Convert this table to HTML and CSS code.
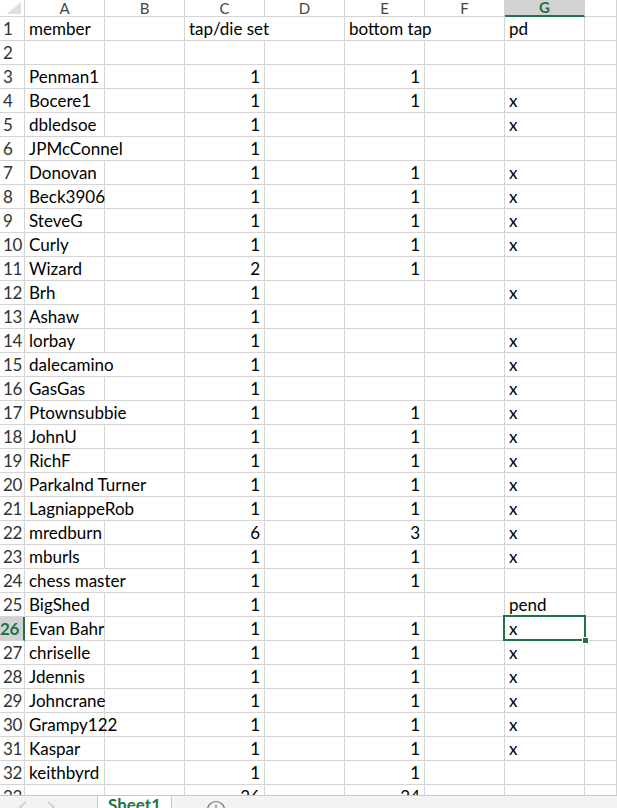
FILE: index.html
```html
<!DOCTYPE html>
<html>
<head>
<meta charset="utf-8">
<title>Sheet1</title>
<link rel="stylesheet" href="styles.css">
</head>
<body>
<div class="sheet">
  <div class="row head">
    <div class="corner"><span class="tri"></span></div>
    <div class="h">A</div><div class="h">B</div><div class="h">C</div><div class="h">D</div><div class="h">E</div><div class="h">F</div><div class="h sel">G</div><div class="h"></div>
  </div>
  <div class="row"><div class="n">1</div><div class="c">member</div><div class="c"></div><div class="c s2">tap/die set</div><div class="c s2">bottom tap</div><div class="c">pd</div><div class="c"></div></div>
  <div class="row"><div class="n">2</div><div class="c"></div><div class="c"></div><div class="c"></div><div class="c"></div><div class="c"></div><div class="c"></div><div class="c"></div><div class="c"></div></div>
  <div class="row"><div class="n">3</div><div class="c">Penman1</div><div class="c"></div><div class="c r">1</div><div class="c"></div><div class="c r">1</div><div class="c"></div><div class="c"></div><div class="c"></div></div>
  <div class="row"><div class="n">4</div><div class="c">Bocere1</div><div class="c"></div><div class="c r">1</div><div class="c"></div><div class="c r">1</div><div class="c"></div><div class="c">x</div><div class="c"></div></div>
  <div class="row"><div class="n">5</div><div class="c">dbledsoe</div><div class="c"></div><div class="c r">1</div><div class="c"></div><div class="c"></div><div class="c"></div><div class="c">x</div><div class="c"></div></div>
  <div class="row"><div class="n">6</div><div class="c s2">JPMcConnel</div><div class="c r">1</div><div class="c"></div><div class="c"></div><div class="c"></div><div class="c"></div><div class="c"></div></div>
  <div class="row"><div class="n">7</div><div class="c">Donovan</div><div class="c"></div><div class="c r">1</div><div class="c"></div><div class="c r">1</div><div class="c"></div><div class="c">x</div><div class="c"></div></div>
  <div class="row"><div class="n">8</div><div class="c">Beck3906</div><div class="c"></div><div class="c r">1</div><div class="c"></div><div class="c r">1</div><div class="c"></div><div class="c">x</div><div class="c"></div></div>
  <div class="row"><div class="n">9</div><div class="c">SteveG</div><div class="c"></div><div class="c r">1</div><div class="c"></div><div class="c r">1</div><div class="c"></div><div class="c">x</div><div class="c"></div></div>
  <div class="row"><div class="n">10</div><div class="c">Curly</div><div class="c"></div><div class="c r">1</div><div class="c"></div><div class="c r">1</div><div class="c"></div><div class="c">x</div><div class="c"></div></div>
  <div class="row"><div class="n">11</div><div class="c">Wizard</div><div class="c"></div><div class="c r">2</div><div class="c"></div><div class="c r">1</div><div class="c"></div><div class="c"></div><div class="c"></div></div>
  <div class="row"><div class="n">12</div><div class="c">Brh</div><div class="c"></div><div class="c r">1</div><div class="c"></div><div class="c"></div><div class="c"></div><div class="c">x</div><div class="c"></div></div>
  <div class="row"><div class="n">13</div><div class="c">Ashaw</div><div class="c"></div><div class="c r">1</div><div class="c"></div><div class="c"></div><div class="c"></div><div class="c"></div><div class="c"></div></div>
  <div class="row"><div class="n">14</div><div class="c">lorbay</div><div class="c"></div><div class="c r">1</div><div class="c"></div><div class="c"></div><div class="c"></div><div class="c">x</div><div class="c"></div></div>
  <div class="row"><div class="n">15</div><div class="c s2">dalecamino</div><div class="c r">1</div><div class="c"></div><div class="c"></div><div class="c"></div><div class="c">x</div><div class="c"></div></div>
  <div class="row"><div class="n">16</div><div class="c">GasGas</div><div class="c"></div><div class="c r">1</div><div class="c"></div><div class="c"></div><div class="c"></div><div class="c">x</div><div class="c"></div></div>
  <div class="row"><div class="n">17</div><div class="c s2">Ptownsubbie</div><div class="c r">1</div><div class="c"></div><div class="c r">1</div><div class="c"></div><div class="c">x</div><div class="c"></div></div>
  <div class="row"><div class="n">18</div><div class="c">JohnU</div><div class="c"></div><div class="c r">1</div><div class="c"></div><div class="c r">1</div><div class="c"></div><div class="c">x</div><div class="c"></div></div>
  <div class="row"><div class="n">19</div><div class="c">RichF</div><div class="c"></div><div class="c r">1</div><div class="c"></div><div class="c r">1</div><div class="c"></div><div class="c">x</div><div class="c"></div></div>
  <div class="row"><div class="n">20</div><div class="c s2">Parkalnd Turner</div><div class="c r">1</div><div class="c"></div><div class="c r">1</div><div class="c"></div><div class="c">x</div><div class="c"></div></div>
  <div class="row"><div class="n">21</div><div class="c s2">LagniappeRob</div><div class="c r">1</div><div class="c"></div><div class="c r">1</div><div class="c"></div><div class="c">x</div><div class="c"></div></div>
  <div class="row"><div class="n">22</div><div class="c">mredburn</div><div class="c"></div><div class="c r">6</div><div class="c"></div><div class="c r">3</div><div class="c"></div><div class="c">x</div><div class="c"></div></div>
  <div class="row"><div class="n">23</div><div class="c">mburls</div><div class="c"></div><div class="c r">1</div><div class="c"></div><div class="c r">1</div><div class="c"></div><div class="c">x</div><div class="c"></div></div>
  <div class="row"><div class="n">24</div><div class="c s2">chess master</div><div class="c r">1</div><div class="c"></div><div class="c r">1</div><div class="c"></div><div class="c"></div><div class="c"></div></div>
  <div class="row"><div class="n">25</div><div class="c">BigShed</div><div class="c"></div><div class="c r">1</div><div class="c"></div><div class="c"></div><div class="c"></div><div class="c">pend</div><div class="c"></div></div>
  <div class="row"><div class="n nsel">26</div><div class="c">Evan Bahr</div><div class="c"></div><div class="c r">1</div><div class="c"></div><div class="c r">1</div><div class="c"></div><div class="c active">x</div><div class="c"></div></div>
  <div class="row"><div class="n">27</div><div class="c">chriselle</div><div class="c"></div><div class="c r">1</div><div class="c"></div><div class="c r">1</div><div class="c"></div><div class="c">x</div><div class="c"></div></div>
  <div class="row"><div class="n">28</div><div class="c">Jdennis</div><div class="c"></div><div class="c r">1</div><div class="c"></div><div class="c r">1</div><div class="c"></div><div class="c">x</div><div class="c"></div></div>
  <div class="row"><div class="n">29</div><div class="c">Johncrane</div><div class="c"></div><div class="c r">1</div><div class="c"></div><div class="c r">1</div><div class="c"></div><div class="c">x</div><div class="c"></div></div>
  <div class="row"><div class="n">30</div><div class="c">Grampy122</div><div class="c"></div><div class="c r">1</div><div class="c"></div><div class="c r">1</div><div class="c"></div><div class="c">x</div><div class="c"></div></div>
  <div class="row"><div class="n">31</div><div class="c">Kaspar</div><div class="c"></div><div class="c r">1</div><div class="c"></div><div class="c r">1</div><div class="c"></div><div class="c">x</div><div class="c"></div></div>
  <div class="row"><div class="n">32</div><div class="c">keithbyrd</div><div class="c"></div><div class="c r">1</div><div class="c"></div><div class="c r">1</div><div class="c"></div><div class="c"></div><div class="c"></div></div>
  <div class="row"><div class="n">33</div><div class="c"></div><div class="c"></div><div class="c r">36</div><div class="c"></div><div class="c r">24</div><div class="c"></div><div class="c"></div><div class="c"></div></div>
</div>
<div class="tabs">
  <div class="nav">
    <svg class="arr" width="10" height="12" viewBox="0 0 10 12"><path d="M8 1 L2 6 L8 11" fill="none" stroke="#c3c3c3" stroke-width="1.2"/></svg>
    <svg class="arr" width="10" height="12" viewBox="0 0 10 12"><path d="M2 1 L8 6 L2 11" fill="none" stroke="#c3c3c3" stroke-width="1.2"/></svg>
  </div>
  <div class="tab">Sheet1</div>
  <div class="add">
    <svg width="20" height="20" viewBox="0 0 20 20"><circle cx="10" cy="10" r="8.5" fill="none" stroke="#777" stroke-width="1.2"/><path d="M10 5 V15 M5 10 H15" stroke="#777" stroke-width="1.2"/></svg>
  </div>
</div>
</body>
</html>
```
FILE: styles.css
```css
html, body {
  margin: 0;
  padding: 0;
  background: #fff;
  overflow: hidden;
}
body {
  width: 617px;
  height: 808px;
  font-family: Lato, "Liberation Sans", sans-serif;
  color: #000;
}
.sheet {
  height: 795px;
  overflow: hidden;
}
.row {
  display: grid;
  grid-template-columns: 25px repeat(7, 80px) 1fr;
  height: 24px;
}
.row > div {
  box-sizing: border-box;
  border-right: 1px solid #d4d4d4;
  border-bottom: 1px solid #d4d4d4;
  white-space: nowrap;
  overflow: visible;
}
.head {
  height: 17px;
}
.corner {
  position: relative;
}
.tri {
  position: absolute;
  right: 3px;
  bottom: 2px;
  width: 0;
  height: 0;
  border-left: 14px solid transparent;
  border-bottom: 12px solid #dfdfdf;
}
.h {
  font-size: 15px;
  line-height: 16px;
  text-align: center;
  color: #444;
}
.h.sel {
  background: #d2d2d2;
  color: #217346;
  font-weight: bold;
  border-bottom: 2px solid #217346 !important;
  font-size: 15px;
  line-height: 15px;
  overflow: visible;
}
.n {
  font-size: 17px;
  line-height: 23px;
  padding-left: 3px;
  color: #333;
  letter-spacing: -0.3px;
}
.n.nsel {
  background: #d2d2d2;
  color: #217346;
  font-weight: bold;
  padding-left: 0;
  border-right: 2px solid #217346 !important;
}
.c {
  font-size: 17px;
  line-height: 23px;
  padding: 0 4px 0 4px;
}
.c.r {
  text-align: right;
}
.c.s2 {
  grid-column: span 2;
}
.c.active {
  position: relative;
}
.c.active::before {
  content: "";
  position: absolute;
  left: -2px;
  top: -2px;
  width: 83px;
  height: 26px;
  box-sizing: border-box;
  border: 2px solid #217346;
}
.c.active::after {
  content: "";
  position: absolute;
  left: 77px;
  top: 20px;
  width: 5px;
  height: 5px;
  background: #217346;
  border: 1px solid #fff;
}
.tabs {
  height: 13px;
  box-sizing: border-box;
  background: #f3f3f3;
  border-top: 1px solid #c8c8c8;
  display: flex;
  overflow: hidden;
}
.nav {
  width: 97px;
  display: flex;
  gap: 18px;
  padding: 5px 0 0 18px;
  box-sizing: border-box;
}
.arr {
  display: block;
}
.tab {
  width: 75px;
  margin-top: -1px;
  box-sizing: border-box;
  background: #fff;
  border-left: 1px solid #c8c8c8;
  border-right: 1px solid #c8c8c8;
  color: #217346;
  font-weight: bold;
  font-size: 17px;
  line-height: 20px;
  text-align: center;
}
.add {
  padding: 4px 0 0 34px;
}
.add svg {
  display: block;
}
```
